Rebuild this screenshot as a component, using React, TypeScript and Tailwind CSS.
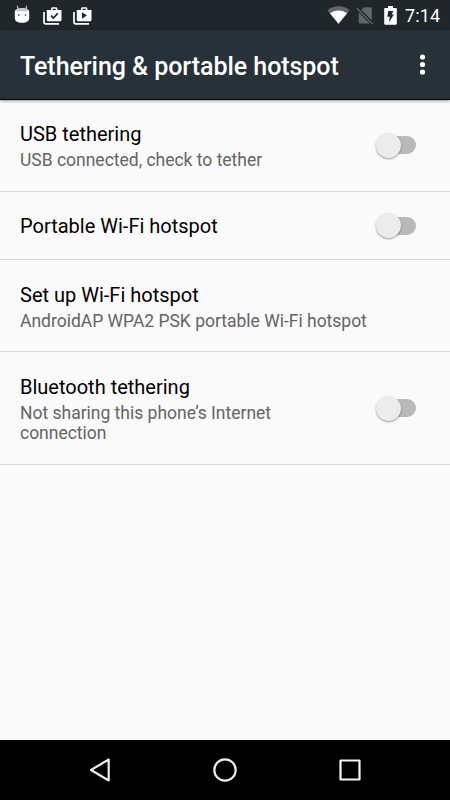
import React from 'react';

interface SettingItem {
  title: string;
  summary?: string;
  toggle: boolean;
  height: string;
}

const items: SettingItem[] = [
  { title: 'USB tethering', summary: 'USB connected, check to tether', toggle: true, height: 'h-[92px] pb-px' },
  { title: 'Portable Wi-Fi hotspot', toggle: true, height: 'h-[68px]' },
  { title: 'Set up Wi-Fi hotspot', summary: 'AndroidAP WPA2 PSK portable Wi-Fi hotspot', toggle: false, height: 'h-[92px] pt-px' },
  { title: 'Bluetooth tethering', summary: 'Not sharing this phone’s Internet connection', toggle: true, height: 'h-[113px]' }
];

const BugdroidIcon: React.FC = () => (
  <svg width="16" height="20" viewBox="0 0 16 20">
    <path d="M3.300 1l1 3.500M12.700 1l-1 3.500" stroke="#bfc3c5" strokeWidth="1.100" strokeLinecap="round" />
    <path d="M.8 7C.8 4.600 3.200 3.200 8 3.200S15.200 4.600 15.200 7v6c0 3.200-2.600 4.700-7.200 4.700S.8 16.200.8 13z" fill="#fff" />
    <path d="M1.800 6.200C2.600 4.200 4.600 3.200 8 3.200s5.400 1 6.200 3z" fill="#c3c7c9" />
    <circle cx="4.700" cy="10" r=".8" fill="#20272b" />
    <circle cx="11.500" cy="10" r=".8" fill="#20272b" />
  </svg>
);

const BagIcon: React.FC<{ play?: boolean }> = ({ play = false }) => (
  <svg width="20" height="18" viewBox="0 0 20 18">
    <path d="M1 5v10.500c0 .8.500 1.300 1.300 1.300H16" fill="none" stroke="#fff" strokeWidth="1.700" />
    <path
      fillRule="evenodd"
      d="M8 3V1.800C8 .8 8.700.2 9.600.2h3.200c.9 0 1.600.6 1.600 1.600V3h4.100v9.700c0 .9-.6 1.500-1.500 1.500H5.300c-.9 0-1.500-.6-1.500-1.500V3zm1.600 0h3.200V1.700H9.600z"
      fill="#fff"
    />
    {play ? (
      <path d="M9 5.300v6.400l5-3.200z" fill="#20272b" />
    ) : (
      <path d="M8 8.700l2.300 2.300 4.500-4.600" fill="none" stroke="#20272b" strokeWidth="1.700" />
    )}
  </svg>
);

const WifiIcon: React.FC = () => (
  <svg width="23" height="18" viewBox="0 0 23 18">
    <path d="M.3 4.200C3.500 1.700 7.300.3 11.500.3s8 1.400 11.200 3.900L11.500 17.800z" fill="#62676a" />
    <path d="M2.900 7.300C5.300 5.500 8.300 4.400 11.500 4.400s6.200 1.100 8.600 2.900L11.500 17.800z" fill="#fff" />
  </svg>
);

const NoSimIcon: React.FC = () => (
  <svg width="18" height="19" viewBox="0 0 18 19">
    <path d="M5.300 3.800L7.900 1.200h6.600c.8 0 1.300.5 1.300 1.300v12zM2.700 6.400L13.800 17.600H4c-.8 0-1.300-.5-1.300-1.300z" fill="#62676a" />
    <path d="M.9 2.200l15.800 15.900" stroke="#62676a" strokeWidth="1.300" />
  </svg>
);

const BatteryIcon: React.FC = () => (
  <svg width="13" height="19" viewBox="0 0 13 19">
    <path d="M4 0h5v2h2.700c.7 0 1.100.4 1.100 1.100v14.500c0 .7-.4 1.100-1.100 1.100H1.300c-.7 0-1.100-.4-1.100-1.100V3.100C.2 2.400.6 2 1.300 2H4z" fill="#fff" />
    <path d="M4.300 4.900h5L7.700 8.500h2.200L5 16.200l.7-5.400H3.200z" fill="#20272b" />
  </svg>
);

const StatusBar: React.FC = () => (
  <div className="flex h-[30px] shrink-0 items-center bg-[#20272b] pl-[14px] pr-[10px]">
    <div className="flex items-center">
      <BugdroidIcon />
      <div className="ml-[13px] mt-px"><BagIcon /></div>
      <div className="ml-[10px] mt-px"><BagIcon play /></div>
    </div>
    <div className="ml-auto flex items-center">
      <WifiIcon />
      <div className="ml-[6px]"><NoSimIcon /></div>
      <div className="ml-[10px]"><BatteryIcon /></div>
      <span className="ml-[8px] mt-px w-[35px] text-[18px] leading-5 tracking-[0.1px] text-white">7:14</span>
    </div>
  </div>
);

const Toggle: React.FC = () => (
  <button type="button" role="switch" aria-checked="false" className="flex h-[25px] w-[40px] shrink-0 items-center">
    <span className="size-[25px] shrink-0 rounded-full bg-[#ececec] shadow-[0_1px_2px_rgba(0,0,0,0.4)] z-10" />
    <span className="-ml-[14px] h-[18px] w-[29px] shrink-0 rounded-r-full bg-[#b9b9b9]" />
  </button>
);

const App: React.FC = () => {
  return (
    <div className="flex h-[800px] w-[450px] flex-col overflow-hidden bg-[#fafafa] font-['Roboto',sans-serif]">
      <StatusBar />
      <header className="z-10 flex h-[70px] shrink-0 items-center justify-between border-b border-black bg-[#263238] pl-5 pr-[24px] pt-[3px] shadow-[0_1px_3px_rgba(0,0,0,0.4)]">
        <h1 className="pt-px text-[25px] leading-[30px] font-medium tracking-[-0.05px] whitespace-nowrap text-white">Tethering &amp; portable hotspot</h1>
        <svg width="7" height="21" viewBox="0 0 7 21" fill="#fff" className="mb-[3px]">
          <circle cx="3.500" cy="3" r="2.600" />
          <circle cx="3.500" cy="10.500" r="2.600" />
          <circle cx="3.500" cy="18" r="2.600" />
        </svg>
      </header>
      <main className="flex-1">
        {items.map(item => (
          <div key={item.title} className={`flex items-center border-b border-[#d5d5d5] pl-5 pr-[34px] ${item.height}`}>
            <div className={item.toggle ? 'w-[290px] pt-px' : 'flex-1 pt-px'}>
              <div className={`text-[20px] leading-[27px] text-black ${item.summary ? '' : 'pt-px'}`}>{item.title}</div>
              {item.summary && <div className="pt-[2px] text-[17.5px] leading-[20.5px] tracking-[-0.01px] text-[#646464]">{item.summary}</div>}
            </div>
            {item.toggle && <div className="ml-auto"><Toggle /></div>}
          </div>
        ))}
      </main>
      <nav className="flex h-[60px] shrink-0 items-center justify-between bg-black pl-[88px] pr-[88px]">
        <svg width="24" height="26" viewBox="0 0 24 26" fill="none" stroke="#ececec" strokeWidth="2.200" strokeLinejoin="round">
          <path d="M20.700 2.500v21L3 13z" />
        </svg>
        <svg width="26" height="26" viewBox="0 0 26 26" fill="none" stroke="#ececec" strokeWidth="2.200">
          <circle cx="13" cy="13" r="10.700" />
        </svg>
        <svg width="24" height="24" viewBox="0 0 24 24" fill="none" stroke="#f5f5f5" strokeWidth="2.200" strokeLinejoin="round">
          <path d="M2.500 2.500h19v19h-19z" />
        </svg>
      </nav>
    </div>
  );
};

export default App;
